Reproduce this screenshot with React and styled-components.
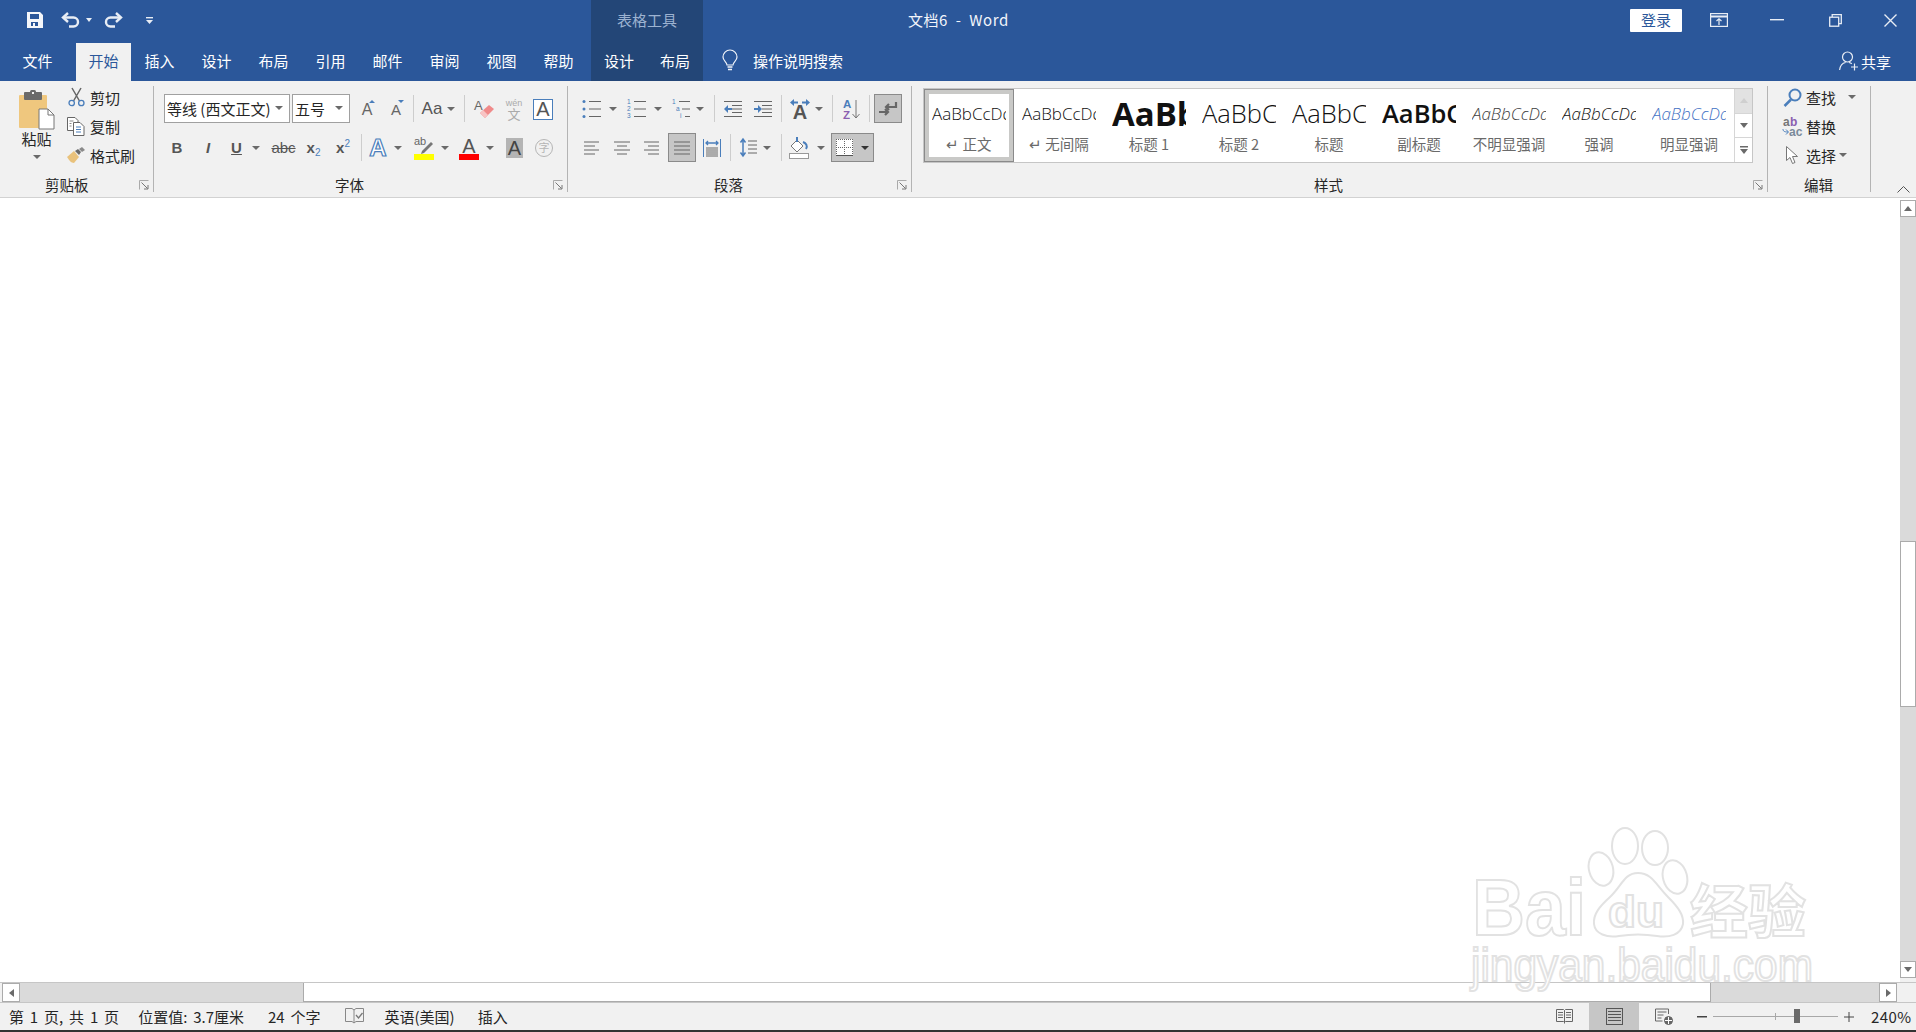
import React from "react";
import styled, { createGlobalStyle } from "styled-components";

const BLUE = "#2b579a";
const INK = "#262626";
const ACCENT = "#4a7ebb";

const Global = createGlobalStyle`
  html, body { margin: 0; padding: 0; background: #fff; overflow: hidden; }
  body { font-family: "Noto Sans CJK SC", "Liberation Sans", sans-serif; color: ${INK}; }
  svg { overflow: visible; }
`;

const Page = styled.div`
  position: relative;
  width: 1916px;
  height: 1032px;
  display: flex;
  flex-direction: column;
  overflow: hidden;
`;

/* header */
const Header = styled.header`
  height: 81px;
  background: ${BLUE};
  display: flex;
  color: #fff;
  font-size: 15px;
`;
const HeadCol = styled.div`
  width: ${(p) => (p.$w ? p.$w + "px" : "auto")};
  flex: ${(p) => (p.$w ? "none" : 1)};
  display: flex;
  flex-direction: column;
  background: ${(p) => p.$bg || "transparent"};
`;
const TopRow = styled.div`
  height: 40px;
  margin-bottom: 3px;
  display: flex;
  align-items: center;
  padding-left: ${(p) => p.$pad || 0}px;
`;
const TabRow = styled.div`
  height: 38px;
  display: flex;
  align-items: center;
  padding-left: ${(p) => p.$pad || 0}px;
`;
const Tab = styled.div`
  width: ${(p) => p.$w || 57}px;
  height: 100%;
  margin-right: ${(p) => p.$mr || 0}px;
  padding-bottom: 3px;
  box-sizing: border-box;
  display: flex;
  align-items: center;
  justify-content: center;
  background: ${(p) => (p.$on ? "#f1f1f1" : "transparent")};
  color: ${(p) => (p.$on ? BLUE : "#fff")};
`;
const QatGap = styled.span`
  display: flex;
  margin-left: ${(p) => p.$ml || 0}px;
`;
const ContextTitle = styled.div`
  width: 100%;
  text-align: center;
  color: #9db3d1;
  font-size: 15px;
  padding-bottom: 2px;
`;
const DocTitle = styled.div`
  color: #f2f5fa;
  font-size: 15px;
  letter-spacing: 0.55px;
  padding-bottom: 2px;
`;
const SignIn = styled.div`
  width: 52px;
  height: 23px;
  margin-left: auto;
  margin-right: 8px;
  padding-bottom: 2px;
  box-sizing: border-box;
  background: #fff;
  color: ${BLUE};
  border-radius: 1px;
  display: flex;
  align-items: center;
  justify-content: center;
`;
const WinBtn = styled.div`
  width: ${(p) => p.$w}px;
  height: 40px;
  display: flex;
  align-items: center;
  justify-content: center;
`;
const Tell = styled.div`
  display: flex;
  align-items: center;
  gap: 15px;
  margin-left: 19px;
  padding-bottom: 3px;
`;
const Share = styled.div`
  margin-left: auto;
  margin-right: 25px;
  display: flex;
  align-items: center;
  gap: 2px;
  padding-bottom: 2px;
`;

/* ribbon */
const Ribbon = styled.div`
  height: 116px;
  background: #f1f1f1;
  border-bottom: 1px solid #d2d2d2;
  display: flex;
  align-items: flex-start;
  font-size: 15px;
`;
const Group = styled.section`
  width: ${(p) => p.$w}px;
  height: 106px;
  margin-top: 5px;
  flex: none;
  box-sizing: content-box;
  border-right: 1px solid #b4b4b4;
  display: flex;
  flex-direction: column;
`;
const GroupBody = styled.div`
  display: flex;
  flex-direction: ${(p) => p.$dir || "column"};
  padding: ${(p) => p.$top || 0}px 0 0 ${(p) => p.$left || 0}px;
`;
const GroupFoot = styled.footer`
  margin-top: auto;
  height: 14px;
  line-height: 14px;
  display: flex;
  align-items: center;
  padding: 0 4px 0 ${(p) => p.$pad}px;
  font-size: 14.5px;
  color: ${INK};
`;
const Launcher = styled.span`
  margin-left: auto;
  display: flex;
`;
const PasteCol = styled.div`
  width: 67px;
  display: flex;
  flex-direction: column;
  align-items: center;
  padding-left: 6px;
  box-sizing: border-box;
  padding-top: 4px;
`;
const PasteLabel = styled.div`
  margin-top: -1px;
  line-height: 20px;
`;
const SmallList = styled.div`
  display: flex;
  flex-direction: column;
  gap: 5px;
  margin-top: -1px;
`;
const SmallRow = styled.div`
  height: 24px;
  display: flex;
  align-items: center;
  gap: ${(p) => p.$gap || 5}px;
  white-space: nowrap;
`;
const SmallIcon = styled.span`
  width: ${(p) => p.$w || 18}px;
  display: flex;
  justify-content: center;
`;
const Row = styled.div`
  height: 29px;
  display: flex;
  align-items: center;
  margin-bottom: 10px;
`;
const Tool = styled.div`
  width: ${(p) => p.$w}px;
  height: 29px;
  flex: none;
  box-sizing: border-box;
  display: flex;
  align-items: center;
  justify-content: center;
  gap: ${(p) => p.$gap ?? 8}px;
  margin-left: ${(p) => p.$ml || 0}px;
  background: ${(p) => (p.$on ? "#c6c6c6" : "transparent")};
  border: ${(p) => (p.$on ? "1px solid #8a8a8a" : "none")};
`;
const Sep = styled.i`
  width: 1px;
  height: 27px;
  flex: none;
  background: #cdcdcd;
  margin-left: ${(p) => p.$ml || 0}px;
`;
const Caret = styled.i`
  width: 0;
  height: 0;
  flex: none;
  display: block;
  border-left: ${(p) => p.$half || 4}px solid transparent;
  border-right: ${(p) => p.$half || 4}px solid transparent;
  border-top: 4px solid ${(p) => p.$c || "#6a6a6a"};
  margin-top: ${(p) => p.$mt || 0}px;
  margin-left: ${(p) => p.$ml || 0}px;
`;
const Combo = styled.div`
  width: ${(p) => p.$w}px;
  height: 29px;
  margin-right: ${(p) => p.$mr || 0}px;
  box-sizing: border-box;
  flex: none;
  background: #fff;
  border: 1px solid #a0a0a0;
  display: flex;
  align-items: center;
  justify-content: space-between;
  padding: 0 6px 1px 2px;
  white-space: nowrap;
  overflow: hidden;
`;
const BoldMark = styled.span`
  font-family: "Liberation Sans", sans-serif;
  font-size: ${(p) => p.$size || 15}px;
  font-weight: ${(p) => (p.$plain ? 400 : 700)};
  font-style: ${(p) => (p.$it ? "italic" : "normal")};
  text-decoration: ${(p) => p.$deco || "none"};
  color: #555;
  line-height: 1;
`;
const SubSup = styled.sub`
  font-size: 10px;
  color: ${ACCENT};
  font-weight: 400;
  vertical-align: ${(p) => (p.$up ? "6px" : "-3px")};
  line-height: 0;
`;

/* style gallery */
const Gallery = styled.div`
  width: 830px;
  height: 75px;
  margin: 2px 0 0 11px;
  box-sizing: border-box;
  border: 1px solid #c6c6c6;
  background: #fff;
  display: flex;
`;
const StyleItem = styled.div`
  width: 90px;
  flex: none;
  box-sizing: border-box;
  height: 73px;
  display: flex;
  flex-direction: column;
  align-items: center;
  justify-content: flex-start;
  background: #fff;
  border: ${(p) => (p.$on ? "1px solid #8a8a8a" : "none")};
  outline: ${(p) => (p.$on ? "4px solid #c9c9c7" : "none")};
  outline-offset: -5px;
`;
const StylePreview = styled.div`
  width: 74px;
  height: 42px;
  overflow: hidden;
  white-space: nowrap;
  display: flex;
  align-items: center;
  font-family: "Open Sans", "Liberation Sans", sans-serif;
  font-weight: ${(p) => p.$weight || 300};
  font-style: ${(p) => (p.$it ? "italic" : "normal")};
  font-size: ${(p) => p.$size || 17}px;
  color: ${(p) => p.$c || "#111"};
  margin-top: ${(p) => (p.$on ? 2 : 3)}px;
`;
const StyleName = styled.div`
  font-size: 14.5px;
  line-height: 20px;
  color: #6a6a6a;
  white-space: nowrap;
`;
const GalleryScroll = styled.div`
  flex: 1;
  display: flex;
  flex-direction: column;
  border-left: 1px solid #d6d6d6;
`;
const ScrollCell = styled.div`
  flex: 1;
  display: flex;
  flex-direction: column;
  gap: 1px;
  align-items: center;
  justify-content: center;
  background: ${(p) => (p.$off ? "#e2e2e2" : "#fff")};
  border-bottom: 1px solid #d6d6d6;
  &:last-child { border-bottom: none; }
`;
const Collapse = styled.div`
  flex: 1;
  height: 112px;
  display: flex;
  align-items: flex-end;
  justify-content: flex-end;
  padding: 0 6px 3px 0;
`;

/* document */
const DocRow = styled.main`
  flex: 1;
  display: flex;
  background: #fff;
  min-height: 0;
`;
const Sheet = styled.div`
  flex: 1;
  background: #fff;
`;
const VBar = styled.div`
  width: 16px;
  margin-top: 2px;
  background: #dadada;
  display: flex;
  flex-direction: column;
`;
const ArrowBtn = styled.div`
  width: ${(p) => p.$w || 16}px;
  height: ${(p) => p.$h || 17}px;
  flex: none;
  box-sizing: border-box;
  background: #fff;
  border: 1px solid #ababab;
  display: flex;
  align-items: center;
  justify-content: center;
  margin-left: ${(p) => p.$ml || 0}px;
`;
const VThumb = styled.div`
  height: 166px;
  margin-top: 324px;
  box-sizing: border-box;
  flex: none;
  background: #fff;
  border: 1px solid #ababab;
`;
const VFoot = styled.div`
  margin-top: auto;
  flex: none;
  display: flex;
  flex-direction: column;
`;
const VCorner = styled.div`
  height: 4px;
  background: #f1f1f1;
`;
const HBar = styled.div`
  height: 20px;
  background: #f1f1f1;
  border-top: 1px solid #c6c6c6;
  box-sizing: border-box;
  display: flex;
  padding-left: 2px;
`;
const HTrack = styled.div`
  flex: none;
  width: 1859px;
  background: #dadada;
  display: flex;
`;
const HThumb = styled.div`
  flex: none;
  width: 1408px;
  margin-left: 283px;
  box-sizing: border-box;
  background: #fff;
  border: 1px solid #ababab;
  border-top: none;
`;

/* status */
const Status = styled.footer`
  height: 27px;
  background: #f1f1f1;
  display: flex;
  align-items: center;
  font-size: 15px;
  word-spacing: 2.500px;
  color: ${INK};
  padding-left: 9px;
  white-space: nowrap;
  border-top: 1px solid #c6c6c6;
`;
const StatusText = styled.span`
  display: inline-flex;
  margin-right: ${(p) => p.$mr}px;
`;
const StatusRight = styled.div`
  margin-left: auto;
  display: flex;
  align-items: center;
  height: 100%;
`;
const ViewBtn = styled.div`
  width: 50px;
  height: 100%;
  display: flex;
  align-items: center;
  justify-content: center;
  background: ${(p) => (p.$on ? "#c6c6c6" : "transparent")};
`;
const Zoomer = styled.div`
  display: flex;
  align-items: center;
  margin-left: 8px;
`;
const ZoomTrack = styled.div`
  position: relative;
  width: 125px;
  height: 1px;
  margin: 0 6px;
  background: #a8a8a8;
`;
const ZoomTick = styled.i`
  position: absolute;
  left: 62px;
  top: -3px;
  width: 1px;
  height: 7px;
  background: #a8a8a8;
`;
const ZoomThumb = styled.i`
  position: absolute;
  left: 81px;
  top: -7px;
  width: 6px;
  height: 14px;
  background: #6a6a6a;
`;
const ZoomValue = styled.span`
  width: 45px;
  margin-left: 17px;
  font-size: 15px;
  letter-spacing: 0.4px;
`;
const BottomEdge = styled.div`
  height: 2px;
  background: #333;
`;
const Watermark = styled.svg`
  position: absolute;
  left: 1460px;
  top: 820px;
  pointer-events: none;
`;

/* icons */
const Save = () => (
  <svg width="16" height="16" viewBox="0 0 16 16">
    <path fill="#f4f6fa" fillRule="evenodd" d="M0 0h13l3 3v13H0zM3 2v5h9V2zM4 10v4h2v-3h2v3h3v-4z" />
  </svg>
);
const Undo = ({ flip }) => (
  <svg width="19" height="16" viewBox="0 0 19 16" style={flip ? { transform: "scaleX(-1)" } : undefined} fill="none" stroke="#e8edf5" strokeWidth="2.400">
    <path d="M7 1 2 5.500 7 10" />
    <path d="M3 5.500h9.500a4.500 4.500 0 0 1 0 9H8" />
  </svg>
);
const Customize = () => (
  <svg width="7" height="9" viewBox="0 0 7 9" fill="#e8edf5">
    <rect width="7" height="1.400" x="0" y="1" />
    <path d="M0 4h7L3.500 8z" />
  </svg>
);
const Bulb = () => (
  <svg width="16" height="21" viewBox="0 0 16 21" fill="none" stroke="#f2f5fa" strokeWidth="1.200">
    <path d="M5 15c0-3-4-4-4-8a7 7 0 0 1 14 0c0 4-4 5-4 8z" />
    <path d="M5.500 17h5M6 19.500h4" strokeWidth="1.600" />
  </svg>
);
const RibbonOpt = () => (
  <svg width="18" height="14" viewBox="0 0 18 14" fill="none" stroke="#e8edf5" strokeWidth="1.200">
    <rect x=".6" y=".6" width="16.800" height="12.800" />
    <path d="M.6 3.500h16.800" strokeWidth="2" />
    <path d="M9 12V6M6.500 8 9 5.800 11.500 8" />
  </svg>
);
const Minimize = () => (
  <svg width="14" height="2" viewBox="0 0 14 2"><rect width="14" height="1.400" fill="#e8edf5" /></svg>
);
const Restore = () => (
  <svg width="13" height="13" viewBox="0 0 13 13" fill="none" stroke="#e8edf5" strokeWidth="1.300">
    <rect x=".7" y="3.200" width="9" height="9" />
    <path d="M3.200 3V.7h9.100v9H10" />
  </svg>
);
const Close = () => (
  <svg width="13" height="13" viewBox="0 0 13 13" stroke="#e8edf5" strokeWidth="1.400">
    <path d="M.5.500l12 12M12.500.500l-12 12" />
  </svg>
);
const ShareIcon = () => (
  <svg width="20" height="20" viewBox="0 0 20 20" fill="none" stroke="#e8edf5" strokeWidth="1.200">
    <circle cx="8.500" cy="6" r="5" />
    <path d="M.6 19c.5-4 3-7 6-7.500M10 11.500c1 .2 2 .6 2.800 1.300M15.500 12.500v7M12 16h7" />
  </svg>
);
const PasteIcon = () => (
  <svg width="36" height="40" viewBox="0 0 36 40">
    <rect x="0" y="5" width="28" height="33" rx="1" fill="#efc77e" />
    <rect x="5" y="2" width="18" height="8" rx="1" fill="#6a6a6a" />
    <rect x="11" y="0" width="6" height="5" rx="1.500" fill="#6a6a6a" />
    <rect x="13" y="2" width="2" height="2" fill="#f1f1f1" />
    <path d="M20 19h9l6 6v14H20z" fill="#fff" stroke="#777" />
    <path d="M29 19v6h6" fill="none" stroke="#777" />
  </svg>
);
const Scissors = () => (
  <svg width="17" height="19" viewBox="0 0 17 19" fill="none">
    <path d="M4 0l7.500 13M13 0L5.500 13" stroke="#666" strokeWidth="1.500" />
    <circle cx="3.700" cy="15" r="2.700" stroke={ACCENT} strokeWidth="1.300" />
    <circle cx="13.300" cy="15" r="2.700" stroke={ACCENT} strokeWidth="1.300" />
  </svg>
);
const CopyIcon = () => (
  <svg width="18" height="19" viewBox="0 0 18 19" fill="#fff" stroke="#666">
    <path d="M.5.500H8l3 3v10H.5z" />
    <path d="M6.500 5.500H13l4 4v9H6.500z" />
    <path d="M9 10h5M9 12.500h5M9 15h5" stroke={ACCENT} />
    <path d="M2.500 4h4M2.500 6.500h2M2.500 9h2" stroke="#888" />
  </svg>
);
const BrushIcon = () => (
  <svg width="18" height="16" viewBox="0 0 18 16">
    <path d="M0 10l7-6 5 6-5 6c-3 0-5-3-7-6z" fill="#e9c27c" />
    <path d="M8 4l3-2 3 3-2 3z" fill="#6a6a6a" />
    <path d="M12 2l3-2 3 3-3 2z" fill="#8a8a8a" />
  </svg>
);
const LauncherIcon = () => (
  <svg width="10" height="10" viewBox="0 0 10 10" fill="none" stroke="#777">
    <path d="M.5 9.500V.5h9" stroke="#aaa" />
    <path d="M2.500 2.500l6 6M9 5v4H5" />
  </svg>
);
const LetterIcon = ({ size = 16, mark }) => (
  <svg width="20" height="22" viewBox="0 0 20 22">
    <text x="10" y="17" textAnchor="middle" fontFamily="Liberation Sans" fontSize={size} fill="#666">A</text>
    {mark === "up" && <path d="M12 5l3-3 3 3z" fill={ACCENT} />}
    {mark === "down" && <path d="M12 2h6l-3 3z" fill={ACCENT} />}
  </svg>
);
const Eraser = () => (
  <svg width="20" height="22" viewBox="0 0 20 22">
    <text x="0" y="12" fontFamily="Liberation Sans" fontSize="13" fill="#666">A</text>
    <path d="M6 15l9-8 5 4-9 9z" fill="#f08a8a" />
    <path d="M6 15l3-3 5 5-3 3z" fill="#f8c4c4" />
  </svg>
);
const Wen = () => (
  <svg width="18" height="24" viewBox="0 0 18 24" fill="#aaa">
    <text x="9" y="9" textAnchor="middle" fontSize="9" fontFamily="Liberation Sans">wén</text>
    <text x="9" y="22" textAnchor="middle" fontSize="13" fontFamily="Noto Sans CJK SC">文</text>
  </svg>
);
const BoxedA = () => (
  <svg width="20" height="22" viewBox="0 0 20 22">
    <rect x=".5" y="1.500" width="19" height="20" fill="#fff" stroke={ACCENT} />
    <text x="10" y="18" textAnchor="middle" fontFamily="Liberation Sans" fontSize="20" fill="#555">A</text>
  </svg>
);
const GlowA = () => (
  <svg width="20" height="24" viewBox="0 0 20 24">
    <text x="10" y="20" textAnchor="middle" fontFamily="Liberation Sans" fontWeight="700" fontSize="24" fill="#fff" stroke={ACCENT} strokeWidth="1.200">A</text>
  </svg>
);
const Highlight = () => (
  <svg width="20" height="24" viewBox="0 0 20 24">
    <text x="0" y="9" fontFamily="Liberation Sans" fontSize="11" fill="#666">ab</text>
    <path d="M8 15l9-9 2 2-9 9-3 1z" fill="#777" />
    <rect x="0" y="18" width="20" height="6" fill="#ff0" />
  </svg>
);
const FontColor = () => (
  <svg width="20" height="24" viewBox="0 0 20 24">
    <text x="10" y="17" textAnchor="middle" fontFamily="Liberation Sans" fontSize="20" fill="#555">A</text>
    <rect x="0" y="18" width="20" height="6" fill="#f00" />
  </svg>
);
const ShadedA = () => (
  <svg width="17" height="20" viewBox="0 0 17 20">
    <rect width="17" height="20" fill="#b4b4b4" />
    <text x="8.500" y="17" textAnchor="middle" fontFamily="Liberation Sans" fontSize="20" fill="#444">A</text>
  </svg>
);
const Circled = () => (
  <svg width="20" height="20" viewBox="0 0 20 20" fill="none">
    <circle cx="10" cy="10" r="8.500" stroke="#b5b5b5" />
    <text x="10" y="14" textAnchor="middle" fontSize="11" fontFamily="Noto Sans CJK SC" fill="#b5b5b5">字</text>
  </svg>
);
const ListIcon = ({ kind }) => (
  <svg width="19" height="18" viewBox="0 0 19 18" fill={ACCENT} fontFamily="Liberation Sans" fontSize="6.500">
    <g stroke="#666" strokeWidth="1">
      <path d={kind === "multi" ? "M7 1.500h11M10 9h8M13 16.500h5" : "M7 1.500h12M7 9h12M7 16.500h12"} />
    </g>
    {kind === "bullet" && (
      <>
        <circle cx="2" cy="1.500" r="1.500" />
        <circle cx="2" cy="9" r="1.500" />
        <circle cx="2" cy="16.500" r="1.500" />
      </>
    )}
    {kind === "number" && (
      <>
        <text x="0" y="4">1</text>
        <text x="0" y="11">2</text>
        <text x="0" y="18">3</text>
      </>
    )}
    {kind === "multi" && (
      <>
        <text x="0" y="4">1</text>
        <text x="4" y="11">a</text>
        <text x="8" y="18">i</text>
      </>
    )}
  </svg>
);
const Indent = ({ flip }) => (
  <svg width="18" height="16" viewBox="0 0 18 16">
    <path d="M0 .5h18M8 4.500h10M8 8h10M8 11.500h10M0 15.500h18" stroke="#666" />
    {flip ? (
      <path d="M0 7h4V4l4 4-4 4V9H0z" fill={ACCENT} />
    ) : (
      <path d="M8 7H4V4L0 8l4 4V9h4z" fill={ACCENT} />
    )}
  </svg>
);
const Asian = () => (
  <svg width="20" height="20" viewBox="0 0 20 20">
    <path d="M0 3.500 4 0v2.500h4v2H4V7zM20 3.500 16 0v2.500h-4v2h4V7z" fill={ACCENT} />
    <text x="10" y="20" textAnchor="middle" fontFamily="Liberation Sans" fontWeight="700" fontSize="20" fill="#555">A</text>
  </svg>
);
const Sort = () => (
  <svg width="17" height="22" viewBox="0 0 17 22" fontFamily="Liberation Sans" fontSize="11.500" fontWeight="700">
    <text x="0" y="10" fill={ACCENT}>A</text>
    <text x="0" y="21" fill="#8a5fb0">Z</text>
    <path d="M13 2v18M9.500 16l3.500 4 3.500-4" fill="none" stroke="#777" />
  </svg>
);
const Pilcrow = () => (
  <svg width="18" height="16" viewBox="0 0 18 16" fill="none" stroke="#666" strokeWidth="2.200">
    <path d="M17 1v5H7M10 3 7 6l3 3" />
    <path d="M0 11h9M6 8l3 3-3 3" />
  </svg>
);
const Align = ({ kind }) => {
  const w = { left: "M0 1h15M0 5h11M0 9h15M0 13h11", center: "M0 1h16M3 5h10M0 9h16M3 13h10", right: "M0 1h15M4 5h11M0 9h15M4 13h11", just: "M0 1h16M0 5h16M0 9h16M0 13h16" }[kind];
  return (
    <svg width="16" height="14" viewBox="0 0 16 14" fill="none" stroke="#666">
      <path d={w} />
    </svg>
  );
};
const Distributed = () => (
  <svg width="18" height="18" viewBox="0 0 18 18" fill="none">
    <path d="M.5 0v18M17.500 0v18" stroke={ACCENT} />
    <path d="M3 9h12M3 11h12M3 13h12M3 15h12M3 17h12" stroke="#666" />
    <path d="M3 4h12M5 2 3 4l2 2M13 2l2 2-2 2" stroke={ACCENT} strokeWidth="1.300" />
  </svg>
);
const LineSpace = () => (
  <svg width="17" height="19" viewBox="0 0 17 19" fill="none">
    <path d="M3 1v17M.5 4.500 3 1l2.500 3.500M.5 14.500 3 18l2.500-3.500" stroke={ACCENT} strokeWidth="1.500" />
    <path d="M8 3h9M8 7h9M8 11h9M8 15h9" stroke="#666" />
  </svg>
);
const Bucket = () => (
  <svg width="20" height="22" viewBox="0 0 20 22" fill="none">
    <path d="M2 9l6-6 6 6-6 6z" fill="#fff" stroke="#777" />
    <path d="M8 0v5M14 5c3 1 5 4 3 7" stroke={ACCENT} strokeWidth="2" />
    <rect x=".5" y="16.500" width="19" height="5" fill="#fff" stroke="#999" />
  </svg>
);
const Borders = () => (
  <svg width="17" height="17" viewBox="0 0 17 17" fill="#fff">
    <rect width="17" height="17" />
    <path d="M0 .5h17M.5 0v17M16.500 0v17M0 8.500h17M8.500 0v17" stroke="#666" strokeDasharray="1 1" />
    <path d="M0 16.500h17" stroke="#555" />
  </svg>
);
const Search = () => (
  <svg width="19" height="19" viewBox="0 0 19 19" fill="none" stroke={ACCENT}>
    <circle cx="12" cy="7" r="5.500" strokeWidth="2" />
    <path d="M8 11.500l-6.500 6.500" strokeWidth="2.500" />
  </svg>
);
const Replace = () => (
  <svg width="20" height="19" viewBox="0 0 20 19" fontFamily="Liberation Sans" fontSize="12" fontWeight="700">
    <text x="1" y="9" fill="#777">a</text>
    <text x="8" y="9" fill="#8a5fb0">b</text>
    <text x="7" y="18.500" fill="#7a8a9a">ac</text>
    <path d="M1 12c0 2 1 3 5 3M4 12.500l2.500 2.500L4 17.500" fill="none" stroke={ACCENT} />
  </svg>
);
const Cursor = () => (
  <svg width="12" height="19" viewBox="0 0 12 19" fill="#fff" stroke="#777">
    <path d="M.5.500v14l3.500-3 2.500 6 2.500-1-2.500-6h5z" />
  </svg>
);
const Chevron = () => (
  <svg width="13" height="7" viewBox="0 0 13 7" fill="none" stroke="#555">
    <path d="M.5 6.500l6-6 6 6" />
  </svg>
);
const Tri = ({ dir, c = "#6a6a6a" }) => {
  const d = { up: "M0 5l4-5 4 5z", down: "M0 0h8L4 5z", left: "M5 0v8L0 4z", right: "M0 0l5 4-5 4z" }[dir];
  const w = dir === "left" || dir === "right" ? 5 : 8;
  const h = dir === "left" || dir === "right" ? 8 : 5;
  return (
    <svg width={w} height={h} viewBox={`0 0 ${w} ${h}`} fill={c}>
      <path d={d} />
    </svg>
  );
};
const MoreBar = () => (
  <svg width="8" height="2" viewBox="0 0 8 2"><rect width="8" height="1.500" fill="#6a6a6a" /></svg>
);
const Proof = () => (
  <svg width="19" height="17" viewBox="0 0 19 17" fill="none" stroke="#888">
    <path d="M.5.500H7l2 1.500 2-1.500h7.500v13H11L9 15l-2-1.500H.5z" />
    <path d="M9 2v13" />
    <path d="M11 7l2.500 3 4-5" stroke="#777" strokeWidth="1.300" />
  </svg>
);
const ReadView = () => (
  <svg width="17" height="17" viewBox="0 0 17 17" fill="none" stroke="#666">
    <path d="M.5 1.500h7l1 1 1-1h7v12h-7l-1 1-1-1h-7zM8.500 2.500v13" />
    <path d="M2 4.500h5M2 7h5M2 9.500h5M10 4.500h5M10 7h5M10 9.500h5" />
  </svg>
);
const PrintView = () => (
  <svg width="17" height="17" viewBox="0 0 17 17" fill="none" stroke="#555">
    <rect x=".5" y=".5" width="16" height="16" />
    <path d="M2 3.500h13M2 6.500h13M2 9.500h13M2 12.500h13" />
  </svg>
);
const WebView = () => (
  <svg width="18" height="17" viewBox="0 0 18 17" fill="none" stroke="#666">
    <path d="M.5 1h13v5M.5 1v12h7" />
    <path d="M2.500 4h9M2.500 7h6M2.500 10h4" />
    <circle cx="13.500" cy="12.500" r="4" fill="#666" />
    <path d="M10 12.500h7M13.500 9v7" stroke="#fff" />
  </svg>
);

const styleItems = [
  { sample: "AaBbCcDd", name: "↵ 正文", on: true },
  { sample: "AaBbCcDd", name: "↵ 无间隔" },
  { sample: "AaBbCc", name: "标题 1", size: 33, weight: 700 },
  { sample: "AaBbC", name: "标题 2", size: 25.5 },
  { sample: "AaBbC", name: "标题", size: 25.5 },
  { sample: "AaBbC", name: "副标题", size: 25.5, weight: 600 },
  { sample: "AaBbCcDd", name: "不明显强调", it: true, c: "#404040" },
  { sample: "AaBbCcDd", name: "强调", it: true },
  { sample: "AaBbCcDd", name: "明显强调", it: true, c: "#4472c4" },
];

const tabs = ["插入", "设计", "布局", "引用", "邮件", "审阅", "视图", "帮助"];

export default function App() {
  return (
    <Page>
      <Global />
      <Header>
        <HeadCol $w={591}>
          <TopRow $pad={27}>
            <Save />
            <QatGap $ml={18}><Undo /></QatGap>
            <QatGap $ml={6}><Caret $half={3} $c="#e8edf5" /></QatGap>
            <QatGap $ml={12}><Undo flip /></QatGap>
            <QatGap $ml={23}><Customize /></QatGap>
          </TopRow>
          <TabRow $pad={9}>
            <Tab $mr={10}>文件</Tab>
            <Tab $on $w={55}>开始</Tab>
            {tabs.map((t) => (
              <Tab key={t}>{t}</Tab>
            ))}
          </TabRow>
        </HeadCol>
        <HeadCol $w={112} $bg="#234677">
          <TopRow><ContextTitle>表格工具</ContextTitle></TopRow>
          <TabRow>
            <Tab $w={56}>设计</Tab>
            <Tab $w={56}>布局</Tab>
          </TabRow>
        </HeadCol>
        <HeadCol>
          <TopRow $pad={205}>
            <DocTitle>文档6 &nbsp;-&nbsp; Word</DocTitle>
            <SignIn>登录</SignIn>
            <WinBtn $w={58}><RibbonOpt /></WinBtn>
            <WinBtn $w={58}><Minimize /></WinBtn>
            <WinBtn $w={58}><Restore /></WinBtn>
            <WinBtn $w={52}><Close /></WinBtn>
          </TopRow>
          <TabRow>
            <Tell>
              <Bulb />
              <span>操作说明搜索</span>
            </Tell>
            <Share>
              <ShareIcon />
              <span>共享</span>
            </Share>
          </TabRow>
        </HeadCol>
      </Header>

      <Ribbon>
        <Group $w={153}>
          <GroupBody $dir="row">
            <PasteCol>
              <PasteIcon />
              <PasteLabel>粘贴</PasteLabel>
              <Caret $mt={6} />
            </PasteCol>
            <SmallList>
              <SmallRow><SmallIcon><Scissors /></SmallIcon>剪切</SmallRow>
              <SmallRow><SmallIcon><CopyIcon /></SmallIcon>复制</SmallRow>
              <SmallRow><SmallIcon><BrushIcon /></SmallIcon>格式刷</SmallRow>
            </SmallList>
          </GroupBody>
          <GroupFoot $pad={45}>剪贴板<Launcher><LauncherIcon /></Launcher></GroupFoot>
        </Group>

        <Group $w={413}>
          <GroupBody $top={8} $left={10}>
            <Row>
              <Combo $w={126} $mr={2}>等线 (西文正文)<Caret /></Combo>
              <Combo $w={58}>五号<Caret /></Combo>
              <Tool $w={29} $ml={2}><LetterIcon mark="up" /></Tool>
              <Tool $w={29}><LetterIcon size={15} mark="down" /></Tool>
              <Sep $ml={3} />
              <Tool $w={43} $ml={3} $gap={5}><BoldMark $plain $size={17}>Aa</BoldMark><Caret /></Tool>
              <Sep $ml={4} />
              <Tool $w={30} $ml={4}><Eraser /></Tool>
              <Tool $w={29}><Wen /></Tool>
              <Tool $w={29}><BoxedA /></Tool>
            </Row>
            <Row>
              <Tool $w={26}><BoldMark>B</BoldMark></Tool>
              <Tool $w={30} $ml={3}><BoldMark $it>I</BoldMark></Tool>
              <Tool $w={45} $gap={10}><BoldMark $deco="underline">U</BoldMark><Caret /></Tool>
              <Tool $w={31}><BoldMark $plain $deco="line-through">abc</BoldMark></Tool>
              <Tool $w={29}><BoldMark>x<SubSup>2</SubSup></BoldMark></Tool>
              <Tool $w={30}><BoldMark>x<SubSup $up>2</SubSup></BoldMark></Tool>
              <Sep $ml={3} />
              <Tool $w={44} $ml={1} $gap={6}><GlowA /><Caret /></Tool>
              <Tool $w={45} $ml={2} $gap={7}><Highlight /><Caret /></Tool>
              <Tool $w={45} $gap={7}><FontColor /><Caret /></Tool>
              <Tool $w={30}><ShadedA /></Tool>
              <Tool $w={30}><Circled /></Tool>
            </Row>
          </GroupBody>
          <GroupFoot $pad={181}>字体<Launcher><LauncherIcon /></Launcher></GroupFoot>
        </Group>

        <Group $w={343}>
          <GroupBody $top={8} $left={8}>
            <Row>
              <Tool $w={46}><ListIcon kind="bullet" /><Caret /></Tool>
              <Tool $w={45}><ListIcon kind="number" /><Caret /></Tool>
              <Tool $w={41} $gap={5}><ListIcon kind="multi" /><Caret /></Tool>
              <Sep $ml={6} />
              <Tool $w={36}><Indent /></Tool>
              <Tool $w={24}><Indent flip /></Tool>
              <Sep $ml={6} />
              <Tool $w={48} $gap={5}><Asian /><Caret /></Tool>
              <Sep $ml={2} />
              <Tool $w={36}><Sort /></Tool>
              <Sep />
              <Tool $w={28} $ml={4} $on><Pilcrow /></Tool>
            </Row>
            <Row>
              <Tool $w={31}><Align kind="left" /></Tool>
              <Tool $w={30}><Align kind="center" /></Tool>
              <Tool $w={30}><Align kind="right" /></Tool>
              <Tool $w={28} $ml={1} $on><Align kind="just" /></Tool>
              <Tool $w={32}><Distributed /></Tool>
              <Sep $ml={2} />
              <Tool $w={48} $gap={6}><LineSpace /><Caret /></Tool>
              <Sep $ml={2} />
              <Tool $w={49}><Bucket /><Caret /></Tool>
              <Tool $w={43} $on><Borders /><Caret $c="#333" /></Tool>
            </Row>
          </GroupBody>
          <GroupFoot $pad={146}>段落<Launcher><LauncherIcon /></Launcher></GroupFoot>
        </Group>

        <Group $w={855}>
          <Gallery>
            {styleItems.map((s) => (
              <StyleItem key={s.name} $on={s.on}>
                <StylePreview $on={s.on} $size={s.size} $weight={s.weight} $it={s.it} $c={s.c}>{s.sample}</StylePreview>
                <StyleName>{s.name}</StyleName>
              </StyleItem>
            ))}
            <GalleryScroll>
              <ScrollCell $off><Tri dir="up" c="#cfcfcf" /></ScrollCell>
              <ScrollCell><Tri dir="down" /></ScrollCell>
              <ScrollCell><MoreBar /><Tri dir="down" /></ScrollCell>
            </GalleryScroll>
          </Gallery>
          <GroupFoot $pad={402}>样式<Launcher><LauncherIcon /></Launcher></GroupFoot>
        </Group>

        <Group $w={102}>
          <GroupBody $left={14}>
            <SmallList>
              <SmallRow $gap={4}><SmallIcon $w={20}><Search /></SmallIcon>查找<Caret $ml={8} /></SmallRow>
              <SmallRow $gap={4}><SmallIcon $w={20}><Replace /></SmallIcon>替换</SmallRow>
              <SmallRow $gap={4}><SmallIcon $w={20}><Cursor /></SmallIcon>选择<Caret $ml={-1} /></SmallRow>
            </SmallList>
          </GroupBody>
          <GroupFoot $pad={36}>编辑</GroupFoot>
        </Group>

        <Collapse><Chevron /></Collapse>
      </Ribbon>

      <DocRow>
        <Sheet />
        <VBar>
          <ArrowBtn><Tri dir="up" /></ArrowBtn>
          <VThumb />
          <VFoot>
            <ArrowBtn><Tri dir="down" /></ArrowBtn>
            <VCorner />
          </VFoot>
        </VBar>
      </DocRow>
      <HBar>
        <ArrowBtn $w={18} $h={19}><Tri dir="left" /></ArrowBtn>
        <HTrack>
          <HThumb />
        </HTrack>
        <ArrowBtn $w={18} $h={19}><Tri dir="right" /></ArrowBtn>
      </HBar>
      <Status>
        <StatusText $mr={19}>第 1 页, 共 1 页</StatusText>
        <StatusText $mr={24}>位置值: 3.7厘米</StatusText>
        <StatusText $mr={24}>24 个字</StatusText>
        <StatusText $mr={21}><Proof /></StatusText>
        <StatusText $mr={23}>英语(美国)</StatusText>
        <StatusText $mr={0}>插入</StatusText>
        <StatusRight>
          <ViewBtn><ReadView /></ViewBtn>
          <ViewBtn $on><PrintView /></ViewBtn>
          <ViewBtn><WebView /></ViewBtn>
          <Zoomer>
            <svg width="10" height="2"><rect width="10" height="1.500" fill="#444" /></svg>
            <ZoomTrack><ZoomTick /><ZoomThumb /></ZoomTrack>
            <svg width="10" height="10"><path d="M0 5h10M5 0v10" stroke="#444" /></svg>
            <ZoomValue>240%</ZoomValue>
          </Zoomer>
        </StatusRight>
      </Status>
      <BottomEdge />

      <Watermark width="360" height="180" viewBox="1460 820 360 180" fill="#fff" stroke="#e2e2e2" strokeWidth="2">
        <ellipse cx="1625" cy="846" rx="13" ry="18" />
        <ellipse cx="1655" cy="848" rx="13" ry="17" />
        <ellipse cx="1601" cy="869" rx="12" ry="17" transform="rotate(-15 1601 869)" />
        <ellipse cx="1675" cy="877" rx="12" ry="17" transform="rotate(-15 1675 877)" />
        <path d="M1638 873c14 0 18 12 30 24 10 10 16 18 15 27-2 11-14 14-26 12-12-2-26-2-38 0-12 2-24-2-25-12-1-10 6-18 16-27 12-11 14-24 28-24z" />
        <text x="1472" y="935" fontFamily="Liberation Sans" fontWeight="700" fontSize="80" textLength="114" lengthAdjust="spacingAndGlyphs">Bai</text>
        <text x="1608" y="927" fontFamily="Liberation Sans" fontWeight="700" fontSize="44" textLength="56" lengthAdjust="spacingAndGlyphs">du</text>
        <text x="1690" y="933" fontFamily="Noto Sans CJK SC" fontWeight="700" fontSize="58">经验</text>
        <text x="1471" y="981" fontFamily="Liberation Sans" fontSize="47" textLength="342" lengthAdjust="spacingAndGlyphs">jingyan.baidu.com</text>
      </Watermark>
    </Page>
  );
}
